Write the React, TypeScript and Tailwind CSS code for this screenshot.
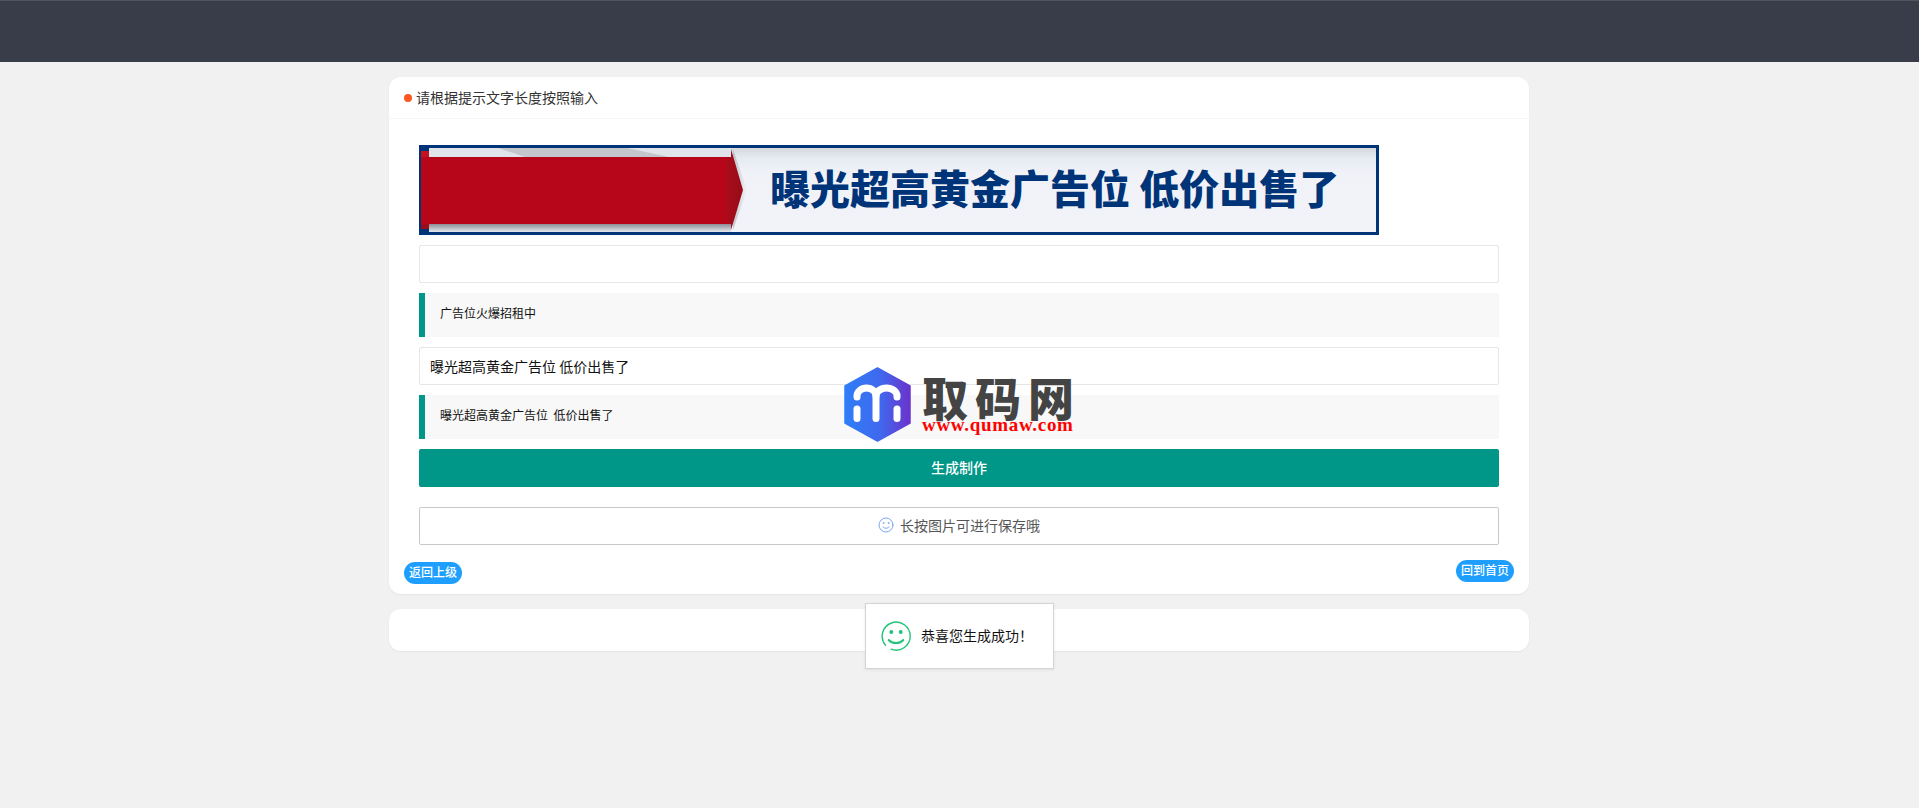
const cjk = "font-['Noto_Sans_CJK_SC','Microsoft_YaHei',sans-serif]";

const Banner = () => (
  <div className="relative h-[90px] w-[960px] shrink-0 overflow-hidden">
    <svg viewBox="0 0 960 90" className="block h-[90px] w-[960px]">
      <defs>
        <linearGradient id="sky" x1="0" y1="0" x2="0" y2="1">
          <stop offset="0" stopColor="#d3d9dc" />
          <stop offset="0.12" stopColor="#e6ebf2" />
          <stop offset="0.3" stopColor="#f0f2f8" />
          <stop offset="1" stopColor="#f1f3f9" />
        </linearGradient>
        <linearGradient id="tip" x1="0" y1="0" x2="1" y2="0">
          <stop offset="0" stopColor="#ab0c1b" />
          <stop offset="1" stopColor="#960b18" />
        </linearGradient>
        <linearGradient id="under" x1="0" y1="0" x2="0" y2="1">
          <stop offset="0" stopColor="#8a8f98" />
          <stop offset="1" stopColor="#e4e8ee" />
        </linearGradient>
        <linearGradient id="glow" x1="0" y1="0" x2="1" y2="0">
          <stop offset="0" stopColor="#9aa0aa" stopOpacity="0.55" />
          <stop offset="1" stopColor="#9aa0aa" stopOpacity="0" />
        </linearGradient>
      </defs>
      <rect width="960" height="90" fill="#003478" />
      <rect x="3" y="3" width="954" height="84" fill="url(#sky)" />
      <rect x="10" y="3" width="302" height="9" fill="#e0e5ec" />
      <polygon points="79,3 208,3 250,12 106,12" fill="#c3c7cc" />
      <rect x="10" y="79" width="302" height="8" fill="url(#under)" />
      <rect x="0" y="0" width="10" height="90" fill="#003478" />
      <rect x="2" y="6" width="8" height="7" fill="#c4101f" />
      <rect x="2" y="78" width="8" height="6" fill="#9c0c1a" />
      <rect x="2" y="12" width="305" height="67" fill="#b70519" />
      <polygon points="314,4 328,45 314,85" fill="url(#glow)" />
      <polygon points="307,12 312,12 312,4 324,45 312,85 312,79 307,79" fill="url(#tip)" />
    </svg>
    <span className={`absolute left-[351px] top-[15px] whitespace-pre text-[40px] leading-[54px] font-black text-[#003478] ${cjk}`}>
      曝光超高黄金广告位 低价出售了
    </span>
  </div>
);

const Quote = ({ text }: { text: string }) => (
  <div className="flex h-11 items-center whitespace-pre border-l-[6px] border-[#009688] bg-[#f8f8f8] pb-[4px] pl-[15px] text-xs text-[#111]">
    {text}
  </div>
);

const Watermark = () => (
  <div className="absolute left-[844px] top-[367px] flex gap-[11px]">
    <svg width="67" height="75" viewBox="0 0 67 75">
      <defs>
        <linearGradient id="hex" x1="0" y1="0" x2="1" y2="0">
          <stop offset="0" stopColor="#2f7df8" />
          <stop offset="0.55" stopColor="#4068ee" />
          <stop offset="1" stopColor="#6a33cc" />
        </linearGradient>
      </defs>
      <path d="M33.5 1 L66 19 V56 L33.5 74 L1 56 V19 Z" fill="url(#hex)" stroke="url(#hex)" strokeWidth="1.5" strokeLinejoin="round" />
      <g fill="none" stroke="#fff" strokeWidth="7" strokeLinecap="round">
        <path d="M13 30 V29 a9.5 8 0 0 1 19 0 V51.5" />
        <path d="M32 29 a10.5 8 0 0 1 21 0 V30" />
        <path d="M13 42 V51.5" />
        <path d="M53 42 V51.5" />
      </g>
    </svg>
    <div className="flex flex-col pt-[7px]">
      <span className={`text-[46px] leading-[44px] font-black tracking-[7px] text-[#444] ${cjk}`}>取码网</span>
      <span className="font-['Liberation_Serif',serif] text-[19px] leading-[14px] font-bold tracking-[0.7px] text-[#f00]">www.qumaw.com</span>
    </div>
  </div>
);

export default function App() {
  return (
    <div className={`relative min-h-[808px] bg-[#f1f1f1] text-sm ${cjk}`}>
      <div className="h-[62px] border-t border-[#50545f] bg-[#393d49]" />
      <div className="mt-[15px] ml-[389px] flex w-[1140px] flex-col gap-[15px]">
        <div className="rounded-xl bg-white shadow-[0_1px_2px_rgba(0,0,0,0.05)]">
          <div className="flex h-[42px] items-center gap-[4px] border-b border-[#f6f6f6] pb-[2px] pl-[15px] text-[#333]">
            <span className="mt-[2px] h-2 w-2 rounded-full bg-[#ff5722]" />
            请根据提示文字长度按照输入
          </div>
          <div className="flex flex-col gap-[10px] px-[30px] pt-[26px]">
            <Banner />
            <input className="h-[38px] rounded-[2px] border border-[#e6e6e6] px-[10px]" />
            <Quote text="广告位火爆招租中" />
            <input
              className="h-[38px] rounded-[2px] border border-[#e6e6e6] px-[10px] pb-[1px] text-[#111]"
              defaultValue="曝光超高黄金广告位 低价出售了"
            />
            <Quote text="曝光超高黄金广告位  低价出售了" />
            <button className="h-[38px] rounded-[2px] bg-[#009688] pb-[2px] font-medium text-white">生成制作</button>
            <div className="mt-[10px] flex h-[38px] items-center justify-center gap-[6px] rounded-[2px] border border-[#c9c9c9] pb-[2px] text-[#555]">
              <svg width="16" height="16" viewBox="0 0 16 16" fill="none" stroke="#7ba7f0" strokeWidth="1" strokeLinecap="round">
                <circle cx="8" cy="8" r="7" />
                <path d="M4.8 9.8c1.6 2 4.8 2 6.4 0" />
                <circle cx="5.5" cy="6" r="0.4" fill="#7ba7f0" />
                <circle cx="10.5" cy="6" r="0.4" fill="#7ba7f0" />
              </svg>
              长按图片可进行保存哦
            </div>
          </div>
          <div className="flex justify-between px-[15px] pt-[15px] pb-[10px]">
            <a className="mt-[2px] flex h-[22px] items-center rounded-full bg-[#1e9fff] px-[5px] pb-[2px] text-xs font-medium text-white">返回上级</a>
            <a className="mb-[2px] flex h-[22px] items-center rounded-full bg-[#1e9fff] px-[5px] pb-[2px] text-xs font-medium text-white">回到首页</a>
          </div>
        </div>
        <div className="h-[42px] rounded-xl bg-white shadow-[0_1px_2px_rgba(0,0,0,0.05)]" />
      </div>

      <Watermark />

      <div className="absolute left-[865px] top-[603px] flex h-[66px] w-[189px] items-center gap-[10px] border border-[#d3d4d3] bg-white pl-[15px] text-[#111] shadow-[0_1px_3px_rgba(0,0,0,0.08)]">
        <svg width="30" height="30" viewBox="0 0 30 30" fill="none" stroke="#22c47a" strokeWidth="1.4" strokeLinecap="round">
          <path d="M4.5 24.2 A14 14 0 1 1 10.1 28.2" />
          <path d="M7.7 19c3.5 4 11.1 4 14.6 0" strokeWidth="2" />
          <circle cx="10.3" cy="11" r="2" fill="#22c47a" stroke="none" />
          <circle cx="19.7" cy="11" r="2" fill="#22c47a" stroke="none" />
        </svg>
        <span className="pb-[2px]">恭喜您生成成功！</span>
      </div>
    </div>
  );
}
